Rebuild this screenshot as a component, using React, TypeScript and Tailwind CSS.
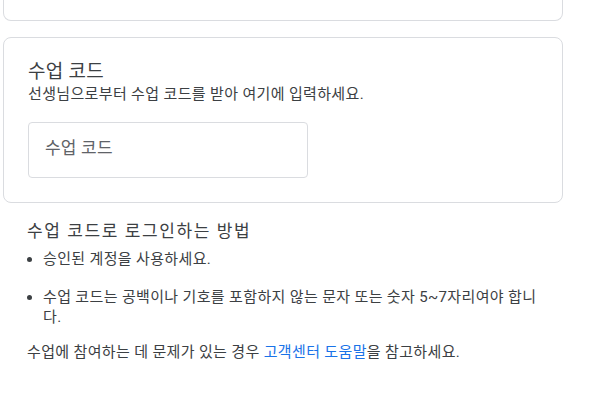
import React from "react";

export default function App() {
  return (
    <div
      className="w-[593px] h-[409px] bg-white overflow-hidden text-[#3c4043]"
      style={{ fontFamily: 'Roboto, "Noto Sans CJK KR", sans-serif' }}
    >
      <div className="w-[560px] ml-[3px]">
        <div className="h-[21px] border border-t-0 border-[#dadce0] rounded-b-lg" />
        <div className="mt-4 h-[166px] border border-[#dadce0] rounded-lg px-6 pt-[22px]">
          <div className="text-[19px] leading-6 tracking-[0.3px] text-[#3c4043]">수업 코드</div>
          <div className="text-[15px] leading-5 tracking-[0.35px] text-[#3c4043]">
            선생님으로부터 수업 코드를 받아 여기에 입력하세요.
          </div>
          <div className="mt-[18px] w-[280px] h-[56px] border border-[#dadce0] rounded flex items-center px-4 pb-[2px] text-[17px] tracking-[0.2px] text-[#5f6368]">
            수업 코드
          </div>
        </div>
        <div className="px-6 pt-[16px] text-[15px] leading-5 tracking-[0.35px]">
          <div className="text-[17px] leading-6 tracking-[1.6px]">수업 코드로 로그인하는 방법</div>
          <ul className="list-disc pl-4 mt-[6px] space-y-[18px]">
            <li>승인된 계정을 사용하세요.</li>
            <li>수업 코드는 공백이나 기호를 포함하지 않는 문자 또는 숫자 5~7자리여야 합니다.</li>
          </ul>
          <p className="mt-[15px]">
            수업에 참여하는 데 문제가 있는 경우{" "}
            <span className="text-[#1a73e8]">고객센터 도움말</span>을 참고하세요.
          </p>
        </div>
      </div>
    </div>
  );
}
